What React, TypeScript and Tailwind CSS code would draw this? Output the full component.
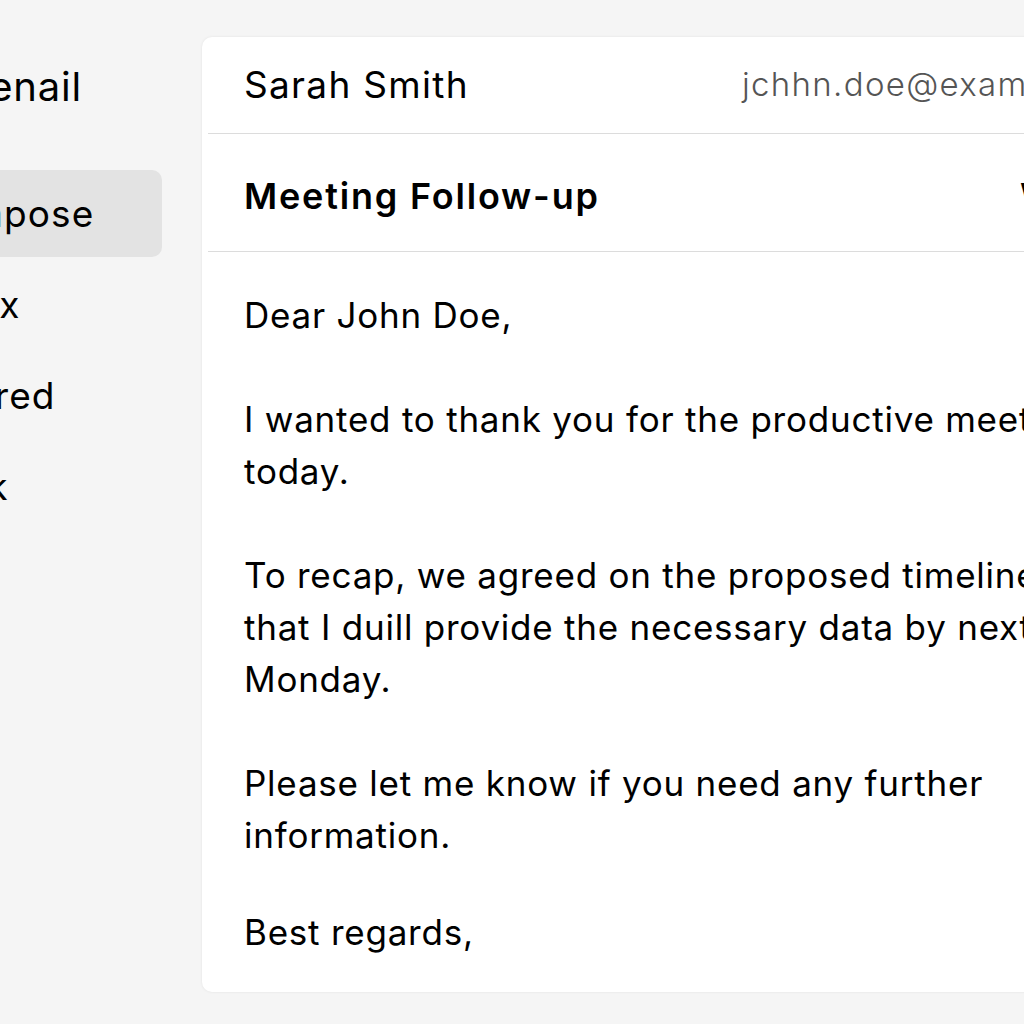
const navItems = [
  { label: "Compose", active: true },
  { label: "Inbox", active: false },
  { label: "Starred", active: false },
  { label: "Junk", active: false },
];

const paragraphs = [
  ["Dear John Doe,"],
  ["I wanted to thank you for the productive meeting", "today."],
  [
    "To recap, we agreed on the proposed timeline and",
    "that I duill provide the necessary data by next",
    "Monday.",
  ],
  ["Please let me know if you need any further", "information."],
  ["Best regards,"],
];

export default function App() {
  return (
    <div
      className="flex h-[1024px] w-[1024px] overflow-hidden bg-[#f5f5f5] text-black"
      style={{ fontFamily: "Inter, 'Noto Sans', sans-serif" }}
    >
      {/* Sidebar (mostly scrolled off to the left) */}
      <aside className="-ml-[118px] w-[280px] flex-none pt-[62px]">
        <div className="pr-[80px] text-right text-[40px] leading-[50px] tracking-[0.02em] whitespace-nowrap">
          Genail
        </div>
        <nav className="mt-[58px] flex flex-col gap-[4px]">
          {navItems.map((item) => (
            <div
              key={item.label}
              className={
                item.active
                  ? "flex h-[87px] items-center rounded-[10px] bg-[#e3e3e3] pl-[37px] text-[37px] tracking-[0.03em] whitespace-nowrap"
                  : "flex h-[87px] items-center pl-[37px] text-[37px] tracking-[0.03em] whitespace-nowrap"
              }
            >
              {item.label}
            </div>
          ))}
        </nav>
      </aside>

      {/* Message card */}
      <main className="ml-[40px] mt-[37px] mb-[32px] flex w-[1100px] flex-none flex-col rounded-[10px] bg-white shadow-[0_0_3px_rgba(0,0,0,0.08)]">
        <div className="flex h-[96px] items-center pl-[42px] whitespace-nowrap">
          <div className="w-[498px] text-[37px] tracking-[0.035em]">Sarah Smith</div>
          <div className="text-[33px] font-light tracking-[0.04em] text-[#555555]">jchhn.doe@example.com</div>
        </div>
        <div className="ml-[6px] h-px bg-[#dcdcdc]" />
        <div className="flex h-[117px] items-center pl-[42px] pt-[6px] whitespace-nowrap">
          <div className="w-[776px] text-[36px] font-semibold tracking-[0.05em]">Meeting Follow-up</div>
          <div className="text-[36px] font-semibold">Wed</div>
        </div>
        <div className="ml-[6px] h-px bg-[#dcdcdc]" />
        <div className="flex flex-col gap-[52px] pl-[42px] pt-[37px] text-[35px] leading-[52px] tracking-[0.022em] whitespace-nowrap">
          {paragraphs.map((lines, i) => (
            <p key={i} className={i === paragraphs.length - 1 ? "-mt-[7px]" : ""}>
              {lines.map((line) => (
                <span key={line} className="block">
                  {line}
                </span>
              ))}
            </p>
          ))}
        </div>
      </main>
    </div>
  );
}
